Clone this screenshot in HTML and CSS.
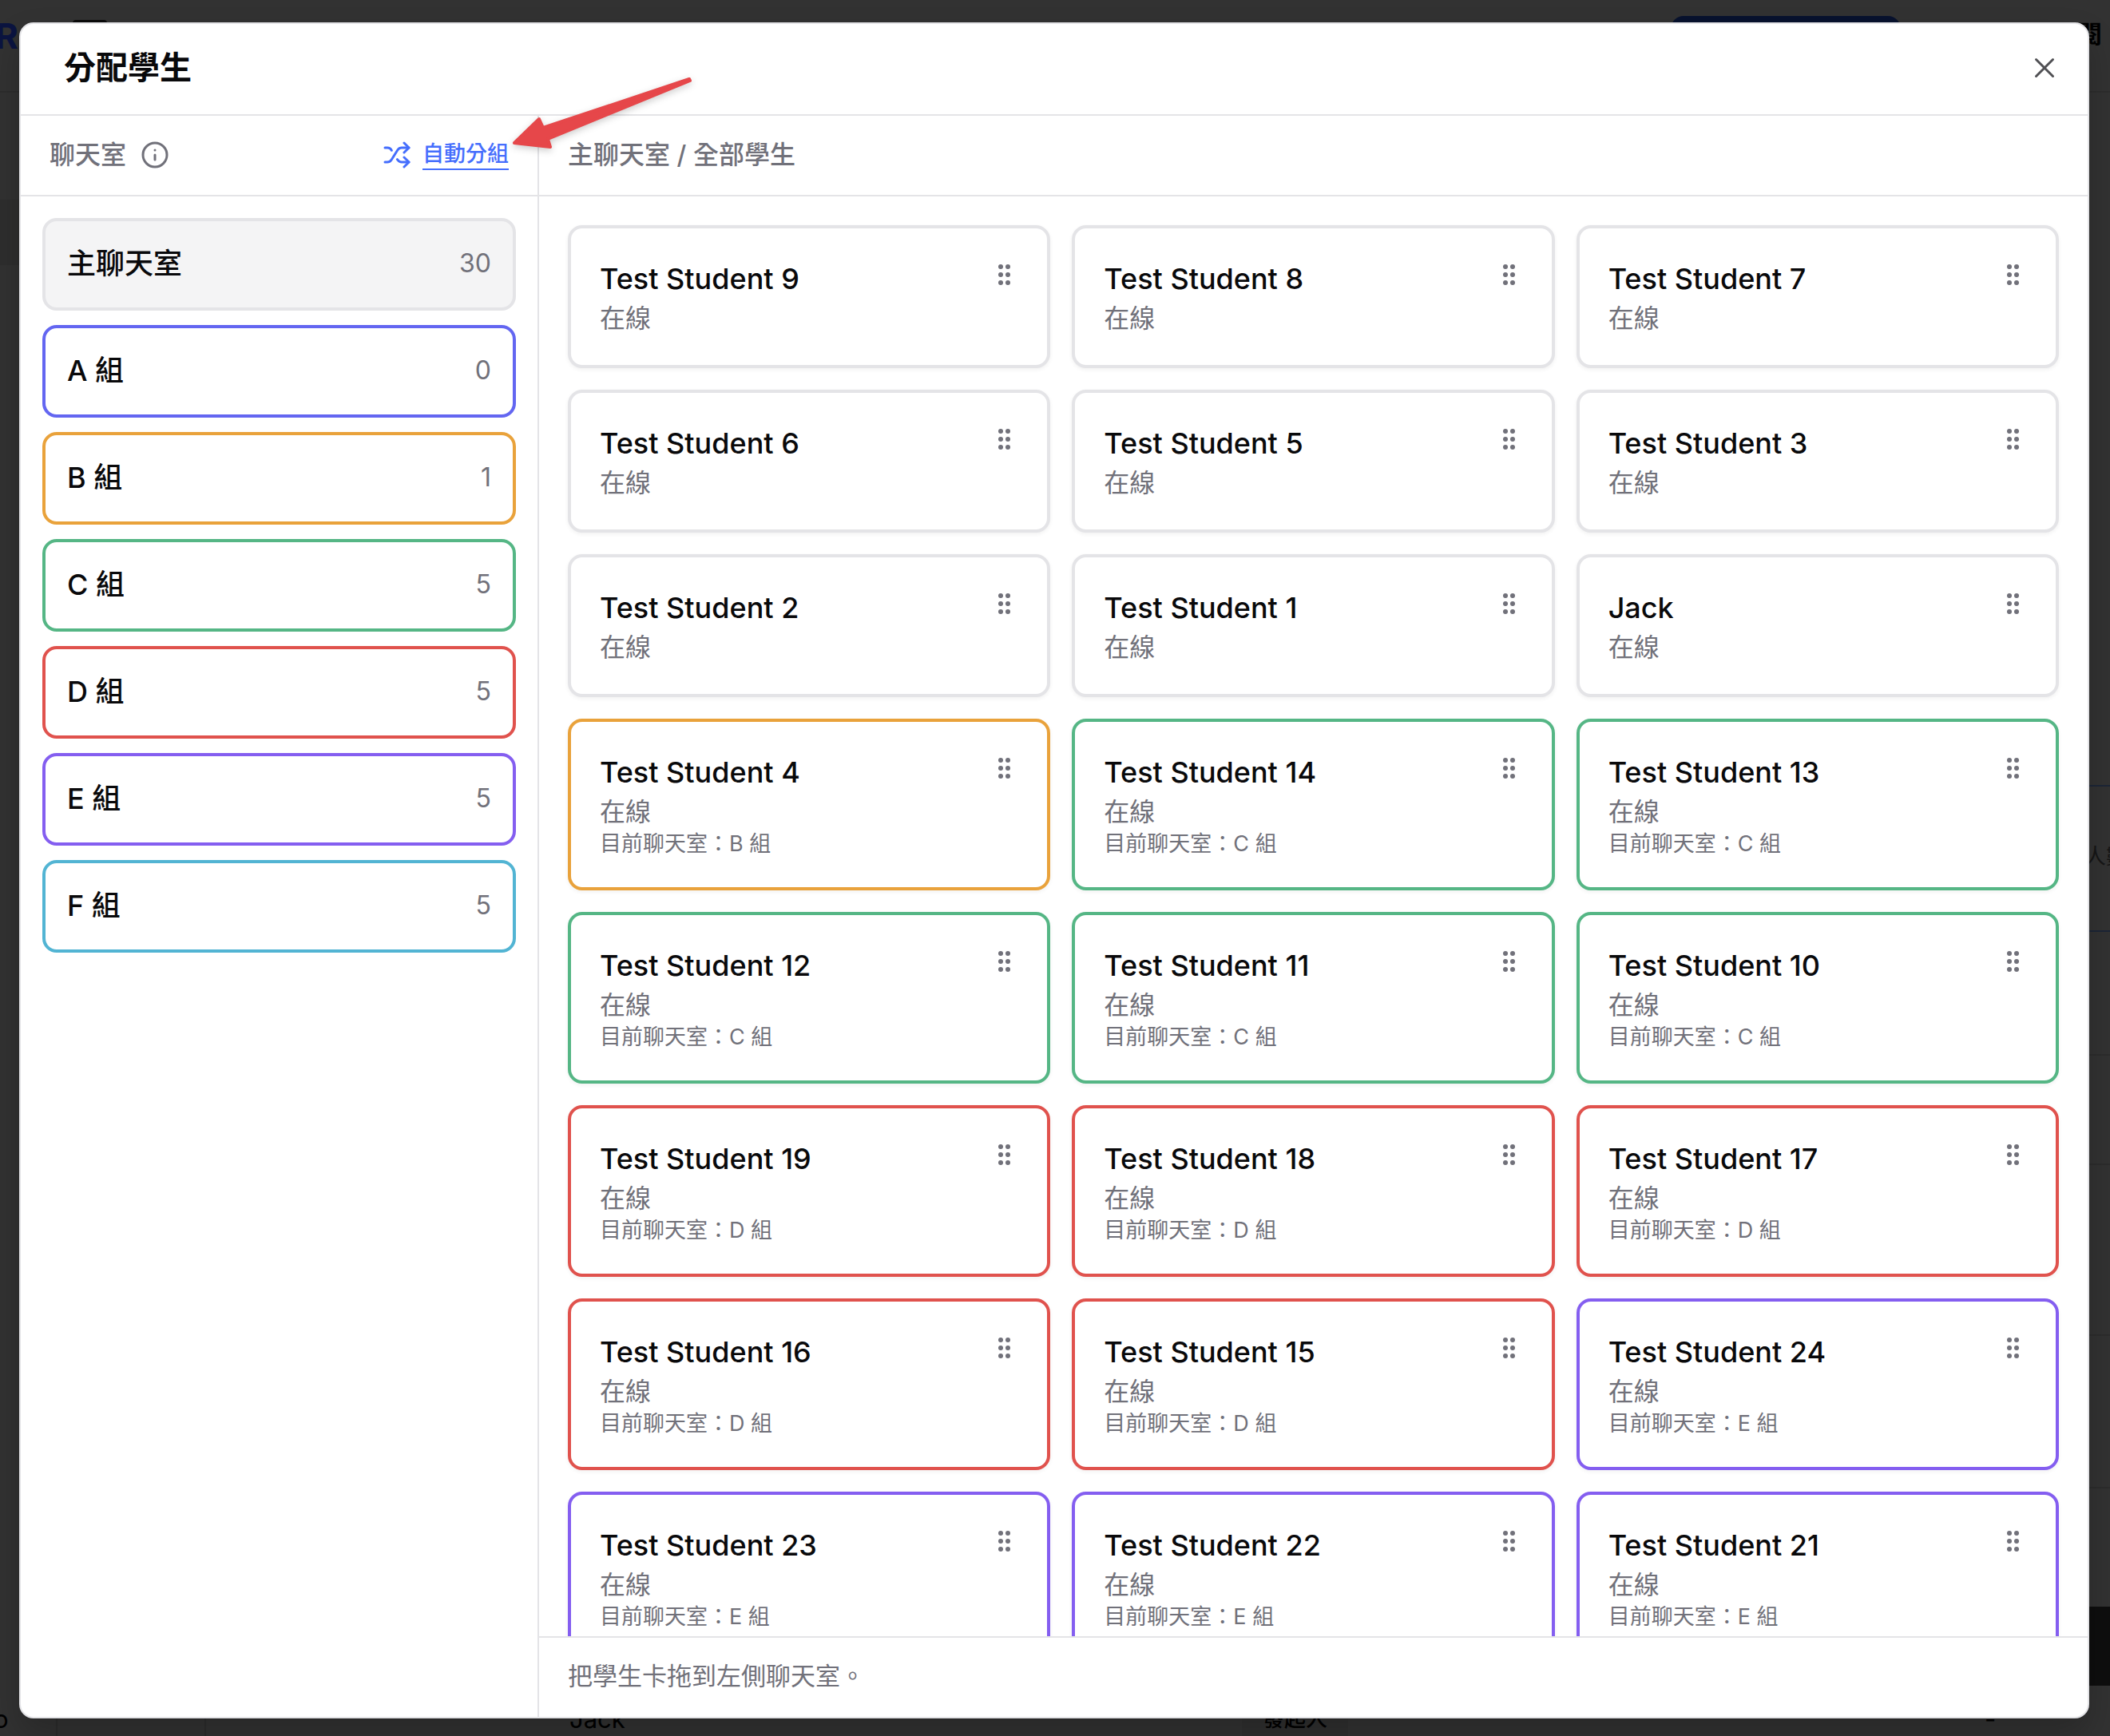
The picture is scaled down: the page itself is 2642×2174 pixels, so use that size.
FILE: index.html
```html
<!DOCTYPE html>
<html lang="zh-Hant">
<head>
  <meta charset="UTF-8" />
  <meta name="viewport" content="width=device-width, initial-scale=1.0"/>
  <title>分配學生</title>
  <link rel="stylesheet" href="styles.css">
</head>
<body>

  <!-- dimmed page behind the dialog -->
  <div class="backdrop" aria-hidden="true">
    <div class="topbar">
      <span class="brand">R</span>
      <span class="menu-mark"></span>
      <span class="publish"></span>
      <span class="read">閱</span>
    </div>
    <span class="band"></span>
    <span class="rule blue rule-1"></span>
    <span class="rule blue rule-2"></span>
    <span class="rule rule-3"></span>
    <span class="rule rule-4"></span>
    <span class="rule rule-5"></span>
    <span class="rule rule-6"></span>
    <span class="people">人數</span>
    <span class="dark-block"></span>
    <span class="col-line col-1"></span>
    <span class="col-line col-2"></span>
    <span class="row-text cell-o">o</span>
    <span class="row-text cell-name">Jack</span>
    <span class="row-text cell-role">發起人</span>
    <span class="row-text cell-dash">-</span>
  </div>

  <div class="dialog" role="dialog" aria-labelledby="dialog-title">
    <header class="dialog-header">
      <h1 id="dialog-title">分配學生</h1>
      <button class="close" aria-label="關閉">
        <svg viewBox="0 0 24 24"><path d="M5 5l14 14M19 5L5 19"/></svg>
      </button>
    </header>

    <div class="dialog-body">
      <aside class="rooms">
        <div class="panel-header">
          <h2>聊天室</h2>
          <svg class="icon info" viewBox="0 0 24 24"><circle cx="12" cy="12" r="10"/><path d="M12 16v-4M12 8h.01"/></svg>
          <button class="auto-group">
            <svg class="icon" viewBox="0 0 24 24"><path d="m18 14 4 4-4 4"/><path d="m18 2 4 4-4 4"/><path d="M2 18h1.973a4 4 0 0 0 3.3-1.7l5.454-8.6a4 4 0 0 1 3.3-1.7H22"/><path d="M2 6h1.972a4 4 0 0 1 3.6 2.2"/><path d="M22 18h-6.041a4 4 0 0 1-3.3-1.8l-.359-.45"/></svg>
            <span>自動分組</span>
          </button>
        </div>
        <div class="room-list">
          <button class="room active"><span>主聊天室</span><span class="count">30</span></button>
          <button class="room group-a"><span>A 組</span><span class="count">0</span></button>
          <button class="room group-b"><span>B 組</span><span class="count">1</span></button>
          <button class="room group-c"><span>C 組</span><span class="count">5</span></button>
          <button class="room group-d"><span>D 組</span><span class="count">5</span></button>
          <button class="room group-e"><span>E 組</span><span class="count">5</span></button>
          <button class="room group-f"><span>F 組</span><span class="count">5</span></button>
        </div>
      </aside>

      <main class="students">
        <div class="panel-header">
          <h2>主聊天室 / 全部學生</h2>
        </div>
        <div class="student-scroll">
          <div class="student-grid" id="student-grid">
            <!-- Cards will appear here -->
          </div>
        </div>
        <footer class="hint">把學生卡拖到左側聊天室。</footer>
      </main>
    </div>
  </div>

  <!-- arrow pointing at the auto group button -->
  <svg class="arrow" viewBox="0 0 240 110" aria-hidden="true">
    <path d="M14 90L45 60L50 71L233 10L234 12L56 85L59 95Z"/>
  </svg>

  <script>
    const students = [
      ['Test Student 9', ''], ['Test Student 8', ''], ['Test Student 7', ''],
      ['Test Student 6', ''], ['Test Student 5', ''], ['Test Student 3', ''],
      ['Test Student 2', ''], ['Test Student 1', ''], ['Jack', ''],
      ['Test Student 4', 'B'], ['Test Student 14', 'C'], ['Test Student 13', 'C'],
      ['Test Student 12', 'C'], ['Test Student 11', 'C'], ['Test Student 10', 'C'],
      ['Test Student 19', 'D'], ['Test Student 18', 'D'], ['Test Student 17', 'D'],
      ['Test Student 16', 'D'], ['Test Student 15', 'D'], ['Test Student 24', 'E'],
      ['Test Student 23', 'E'], ['Test Student 22', 'E'], ['Test Student 21', 'E']
    ];

    const grip = '<svg viewBox="0 0 36 36"><circle cx="14" cy="8" r="3"/><circle cx="23" cy="8" r="3"/><circle cx="14" cy="18" r="3"/><circle cx="23" cy="18" r="3"/><circle cx="14" cy="28" r="3"/><circle cx="23" cy="28" r="3"/></svg>';

    const grid = document.getElementById('student-grid');

    students.forEach(([name, group]) => {
      const card = document.createElement('article');
      card.className = group ? `student group-${group.toLowerCase()}` : 'student';
      card.innerHTML = `
        <div class="student-info">
          <h3>${name}</h3>
          <p class="status">在線</p>
          ${group ? `<p class="current">目前聊天室：${group} 組</p>` : ''}
        </div>
        <button class="grip" aria-label="拖動 ${name}">${grip}</button>`;
      grid.appendChild(card);
    });
  </script>

</body>
</html>
```

FILE: styles.css
```css
* {
  box-sizing: border-box;
  margin: 0;
  padding: 0;
}

body {
  font-family: Inter, 'Noto Sans CJK TC', sans-serif;
  background-color: #323232;
  color: #09090b;
  height: 100vh;
  padding: 28px 26px 22px 24px;
  overflow: hidden;
}

button {
  font: inherit;
  color: inherit;
  background: none;
  border: none;
  cursor: pointer;
}

h1, h2, h3 {
  font-weight: 500;
}

/* page behind the dialog */
.backdrop {
  position: absolute;
  inset: 0;
  overflow: hidden;
  color: #000;
}

.backdrop span {
  position: absolute;
}

.topbar {
  height: 116px;
  border-bottom: 2px solid #2d2d2d;
}

.brand {
  left: -6px;
  top: 20px;
  font-size: 44px;
  line-height: 50px;
  font-weight: 700;
  color: #0b1440;
}

.menu-mark {
  left: 91px;
  top: 25px;
  width: 43px;
  height: 30px;
  border-radius: 4px;
  background: #0a0a0a;
}

.publish {
  right: 262px;
  top: 20px;
  width: 288px;
  height: 60px;
  border-radius: 16px;
  background: #08122e;
}

.read {
  right: 10px;
  top: 22px;
  font-size: 31px;
  line-height: 42px;
  font-weight: 700;
}

.band {
  left: 0;
  top: 250px;
  width: 40px;
  height: 82px;
  background: #2e2e2e;
}

.rule {
  right: 0;
  width: 40px;
  height: 2px;
  background: #2c2c2c;
}

.rule.blue { background: #1c2536; }
.rule-1 { top: 983px; }
.rule-2 { top: 1165px; }
.rule-3 { top: 1320px; }
.rule-4 { top: 1457px; }
.rule-5 { top: 1671px; }
.rule-6 { top: 1862px; }

.people {
  right: -22px;
  top: 1052px;
  font-size: 27px;
  line-height: 42px;
  color: #161616;
}

.dark-block {
  right: 0;
  top: 2012px;
  width: 60px;
  height: 99px;
  background: #0e0e0e;
}

.col-line {
  top: 2100px;
  width: 2px;
  height: 74px;
  background: #2c2c2c;
}

.col-1 { left: 70px; }
.col-2 { left: 256px; }

.row-text {
  top: 2132px;
  font-size: 31px;
  line-height: 42px;
}

.cell-o { left: -8px; }
.cell-name { left: 713px; }
.cell-dash { left: 2485px; }

.cell-role {
  left: 1555px;
  padding: 0 26px;
  font-size: 27px;
  font-weight: 500;
  background: #2f2f2f;
}

/* dialog */
.dialog {
  position: relative;
  display: flex;
  flex-direction: column;
  height: 100%;
  background: #fff;
  border: 2px solid #e4e4e7;
  border-radius: 18px;
  overflow: hidden;
  box-shadow: 0 20px 40px rgba(0, 0, 0, 0.2);
}

.dialog-header {
  display: flex;
  align-items: center;
  justify-content: space-between;
  height: 115px;
  padding: 0 36px 4px 54px;
  border-bottom: 2px solid #e4e4e7;
}

.dialog-header h1 {
  font-size: 40px;
  line-height: 54px;
  font-weight: 600;
}

.close {
  width: 36px;
  height: 36px;
}

.close svg {
  display: block;
  width: 36px;
  height: 36px;
  fill: none;
  stroke: #505054;
  stroke-width: 2;
  stroke-linecap: round;
}

.dialog-body {
  flex: 1;
  display: flex;
  min-height: 0;
}

.rooms {
  flex: 0 0 25%;
  box-sizing: content-box;
  border-right: 2px solid #e4e4e7;
}

.panel-header {
  display: flex;
  align-items: center;
  gap: 18px;
  height: 101px;
  padding: 0 36px 2px;
  border-bottom: 2px solid #e4e4e7;
  color: #71717a;
}

.panel-header h2 {
  font-size: 32px;
  line-height: 45px;
}

.icon {
  width: 36px;
  height: 36px;
  fill: none;
  stroke: currentColor;
  stroke-width: 2;
  stroke-linecap: round;
  stroke-linejoin: round;
}

.auto-group {
  display: flex;
  align-items: center;
  gap: 14px;
  margin-left: auto;
  font-size: 27px;
  font-weight: 500;
  line-height: 36px;
  color: #456efd;
}

.auto-group span {
  border-bottom: 2px solid currentColor;
}

.room-list {
  display: flex;
  flex-direction: column;
  gap: 18px;
  padding: 27px;
}

.room {
  display: flex;
  align-items: center;
  justify-content: space-between;
  height: 116px;
  padding: 0 27px 2px;
  border: 4px solid #e4e4e7;
  border-radius: 18px;
  font-size: 36px;
  line-height: 54px;
  font-weight: 500;
}

.room.active {
  background: #f4f4f5;
}

.count {
  font-size: 32px;
  font-weight: 400;
  color: #71717a;
}

.students {
  flex: 1;
  display: flex;
  flex-direction: column;
  min-width: 0;
}

.student-scroll {
  flex: 1;
  min-height: 0;
  overflow: hidden;
}

.student-grid {
  display: grid;
  grid-template-columns: repeat(3, 1fr);
  gap: 27px;
  padding: 36px;
}

.student {
  display: flex;
  justify-content: space-between;
  padding: 36px;
  background: #fff;
  border: 4px solid #e4e4e7;
  border-radius: 18px;
  box-shadow: 0 2px 5px rgba(0, 0, 0, 0.06);
}

.student h3 {
  font-size: 36px;
  line-height: 54px;
}

.status {
  font-size: 32px;
  line-height: 45px;
  color: #71717a;
}

.current {
  font-size: 27px;
  line-height: 36px;
  color: #71717a;
}

.grip {
  align-self: flex-start;
  padding-top: 4px;
  cursor: grab;
}

.grip svg {
  display: block;
  width: 36px;
  height: 36px;
  fill: #71717a;
}

.hint {
  height: 101px;
  padding: 0 36px;
  border-top: 2px solid #e4e4e7;
  font-size: 31px;
  line-height: 96px;
  color: #71717a;
}

.group-a { border-color: #6366f1; }
.group-b { border-color: #e9a23b; }
.group-c { border-color: #55b685; }
.group-d { border-color: #e0524d; }
.group-e { border-color: #845ef0; }
.group-f { border-color: #52b4d3; }

.arrow {
  position: absolute;
  left: 630px;
  top: 89px;
  width: 240px;
  height: 110px;
  fill: #e6474a;
  stroke: #e6474a;
  stroke-width: 4;
  stroke-linejoin: round;
  filter: drop-shadow(0 3px 4px rgba(0, 0, 0, 0.2));
}
```
